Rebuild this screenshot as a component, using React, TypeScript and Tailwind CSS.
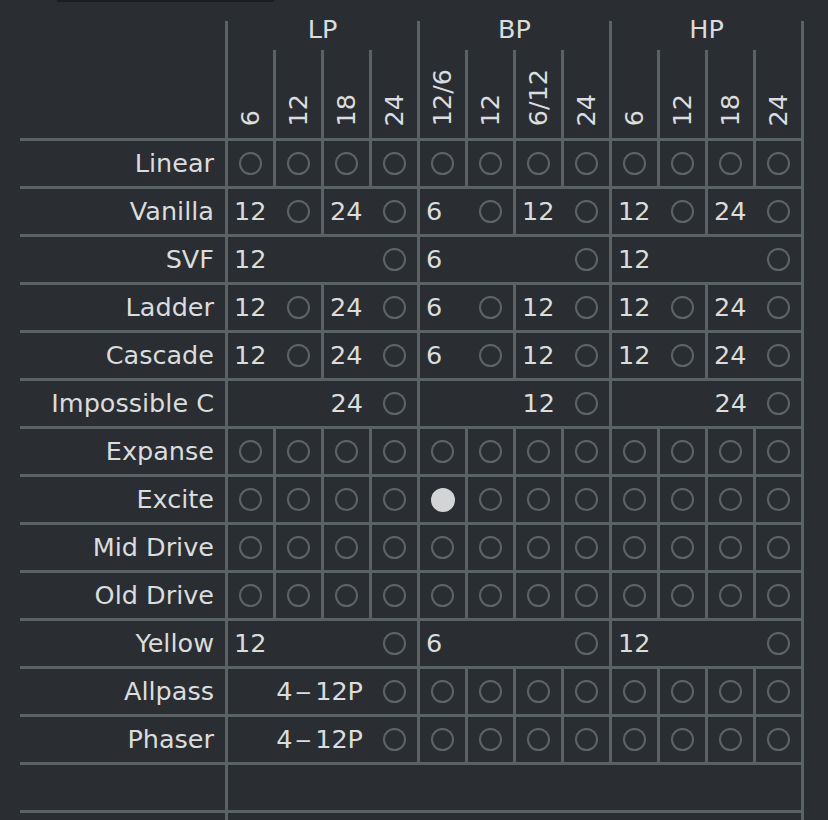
import React from "react";

type Cell = {
  span: 1 | 2 | 4 | 12;
  text?: string;
  align?: "left" | "right";
  filled?: boolean;
  circle?: boolean;
};

const spanWidth: Record<number, string> = {
  1: "w-12",
  2: "w-24",
  4: "w-48",
  12: "w-[576px]",
};

const groups = [
  { name: "LP", cols: ["6", "12", "18", "24"] },
  { name: "BP", cols: ["12/6", "12", "6/12", "24"] },
  { name: "HP", cols: ["6", "12", "18", "24"] },
];

function circles(n: number, filledAt = -1): Cell[] {
  return Array.from({ length: n }, (_, i) => ({
    span: 1,
    circle: true,
    filled: i === filledAt,
  }));
}

function pairs(labels: string[]): Cell[] {
  return labels.map((text) => ({ span: 2, text, circle: true }));
}

function quads(labels: string[], align: "left" | "right" = "left"): Cell[] {
  return labels.map((text) => ({ span: 4, text, align, circle: true }));
}

const rows: { label: string; cells: Cell[] }[] = [
  { label: "Linear", cells: circles(12) },
  { label: "Vanilla", cells: pairs(["12", "24", "6", "12", "12", "24"]) },
  { label: "SVF", cells: quads(["12", "6", "12"]) },
  { label: "Ladder", cells: pairs(["12", "24", "6", "12", "12", "24"]) },
  { label: "Cascade", cells: pairs(["12", "24", "6", "12", "12", "24"]) },
  { label: "Impossible C", cells: quads(["24", "12", "24"], "right") },
  { label: "Expanse", cells: circles(12) },
  { label: "Excite", cells: circles(12, 4) },
  { label: "Mid Drive", cells: circles(12) },
  { label: "Old Drive", cells: circles(12) },
  { label: "Yellow", cells: quads(["12", "6", "12"]) },
  {
    label: "Allpass",
    cells: [{ span: 4, text: "4–12P", align: "right", circle: true }, ...circles(8)],
  },
  {
    label: "Phaser",
    cells: [{ span: 4, text: "4–12P", align: "right", circle: true }, ...circles(8)],
  },
  { label: "", cells: [{ span: 12 }] },
  { label: "", cells: [{ span: 12 }] },
];

function Circle({ filled }: { filled?: boolean }) {
  if (filled) {
    return <div className="w-6 h-6 rounded-full bg-[#d2d4d6]" />;
  }
  return (
    <div className="w-[23px] h-[23px] rounded-full border-2 border-[#5b6466]" />
  );
}

// the pole-range labels use a wide spaced dash, like the plugin UI
function CellText({ text }: { text?: string }) {
  if (!text || !text.includes("–")) return <>{text}</>;
  const [a, b] = text.split("–");
  return (
    <>
      {a}
      <span className="inline-block mx-[5px] scale-x-[1.3]">–</span>
      {b}
    </>
  );
}

function FilterCell({ cell }: { cell: Cell }) {
  const base = `${spanWidth[cell.span]} flex items-center border-l-[3px] border-[#596264]`;

  if (cell.span === 1) {
    return (
      <div className={`${base} justify-center`}>
        {cell.circle ? <Circle filled={cell.filled} /> : null}
      </div>
    );
  }

  return (
    <div className={base}>
      <div
        className={`flex-1 leading-[25px] ${
          cell.align === "right" ? "text-right pr-[9px]" : "pl-[6px]"
        }`}
      >
        <CellText text={cell.text} />
      </div>
      {cell.circle ? (
        <div className="w-[45px] flex items-center justify-center">
          <Circle />
        </div>
      ) : null}
    </div>
  );
}

export default function App() {
  return (
    <div className="w-[828px] h-[820px] overflow-hidden bg-[#2a2e32] text-[#dadcdd] text-[25.5px] font-['DejaVu_Sans',sans-serif]">
      <div className="ml-[57px] w-[217px] h-[2px] bg-[#1c1f22]" />

      {/* column headers */}
      <div className="flex ml-5 mt-[19px]">
        <div className="w-[205px]" />
        {groups.map((g) => (
          <div
            key={g.name}
            className="w-48 h-[117px] flex flex-col border-l-[3px] border-[#596264]"
          >
            <div className="h-[29px] -mt-1 mb-1 text-center leading-[25px]">
              {g.name}
            </div>
            <div className="flex flex-1">
              {g.cols.map((c, ci) => (
                <div
                  key={ci}
                  className={`flex items-end justify-center pb-3 ${
                    ci === 0 ? "w-[45px]" : "w-12 border-l-[3px] border-[#596264]"
                  }`}
                >
                  <span className="[writing-mode:vertical-rl] rotate-180 leading-[25px]">
                    {c}
                  </span>
                </div>
              ))}
            </div>
          </div>
        ))}
        <div className="w-[3px] h-[117px] bg-[#596264]" />
      </div>

      {/* filter rows */}
      <div className="ml-5">
        {rows.map((row, ri) => (
          <div
            key={ri}
            className="flex w-[784px] h-12 border-t-[3px] border-[#596264]"
          >
            <div className="w-[205px] flex items-center justify-end pr-[11px] leading-[25px]">
              {row.label}
            </div>
            {row.cells.map((cell, ci) => (
              <FilterCell key={ci} cell={cell} />
            ))}
            <div className="w-[3px] bg-[#596264]" />
          </div>
        ))}
      </div>
    </div>
  );
}
